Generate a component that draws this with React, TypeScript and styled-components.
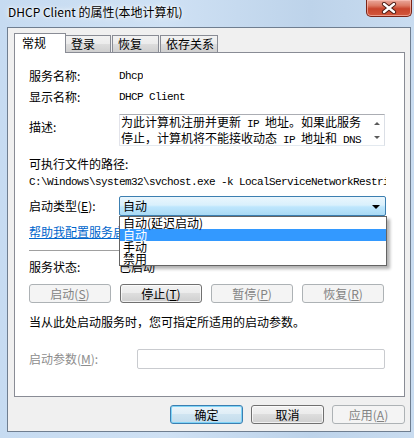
import styled, { createGlobalStyle } from 'styled-components';

const CJK = `"Noto Sans CJK SC", "Liberation Sans", sans-serif`;
const MONO = `"Liberation Mono", "Noto Sans CJK SC", monospace`;

const GlobalStyle = createGlobalStyle`
  html, body {
    margin: 0;
    padding: 0;
  }
  body {
    width: 414px;
    height: 438px;
    overflow: hidden;
    font-family: ${CJK};
    font-size: 12px;
  }
`;

const Window = styled.div`
  width: 414px;
  height: 438px;
  box-sizing: border-box;
  display: flex;
  flex-direction: column;
  background: linear-gradient(to right, #c6dbf1 0%, #cfe1f4 40%, #bdd3ea 75%, #c9dcf0 100%);
  font-family: ${CJK};
  font-size: 12px;
  color: #000;
`;

const TitleBar = styled.div`
  height: 27px;
  flex: none;
  display: flex;
  justify-content: space-between;
  align-items: flex-start;
  padding: 0 2px 0 8px;
`;

const Title = styled.div`
  margin-top: 3px;
  line-height: 18px;
  font-size: 12px;
  text-shadow: 0 0 6px #ffffff, 0 0 3px #ffffff;
  white-space: nowrap;
`;

const CloseButton = styled.div`
  width: 46px;
  height: 17px;
  box-sizing: border-box;
  border: 1px solid #7a2416;
  border-top: none;
  border-radius: 0 0 5px 5px;
  background: linear-gradient(to bottom, #e9a99c 0%, #dc7a64 35%, #c8452c 55%, #d3583d 100%);
  box-shadow: inset 0 0 0 1px rgba(255, 200, 190, 0.6);
  display: flex;
  align-items: center;
  justify-content: center;
`;

const Client = styled.div`
  flex: 1;
  margin: 0 3px 6px 7px;
  border: 1px solid #6f7e90;
  background: #f0f0f0;
  padding: 5px 5px 0 6px;
  display: flex;
  flex-direction: column;
`;

const TabStrip = styled.div`
  height: 19px;
  display: flex;
  align-items: flex-end;
`;

const Tab = styled.div<{ $active?: boolean; $w: number }>`
  position: relative;
  box-sizing: border-box;
  width: ${(p) => p.$w}px;
  height: ${(p) => (p.$active ? 20 : 17)}px;
  margin-bottom: ${(p) => (p.$active ? -1 : 0)}px;
  margin-right: ${(p) => (p.$active ? 0 : 1)}px;
  z-index: ${(p) => (p.$active ? 1 : 0)};
  border: 1px solid #898c95;
  border-bottom: none;
  padding-left: ${(p) => (p.$active ? 7 : 5)}px;
  line-height: ${(p) => (p.$active ? 18 : 16)}px;
  background: ${(p) =>
    p.$active ? '#ffffff' : 'linear-gradient(to bottom, #f2f2f2 0%, #ebebeb 50%, #dddddd 50%, #cfcfcf 100%)'};
  white-space: nowrap;
`;

const Panel = styled.div`
  box-sizing: border-box;
  height: 345px;
  border: 1px solid #898c95;
  background: #ffffff;
  padding: 16px 18px 0 14px;
  display: flex;
  flex-direction: column;
`;

const Row = styled.div<{ $mt: number; $h?: number }>`
  display: flex;
  align-items: flex-start;
  margin-top: ${(p) => p.$mt}px;
  height: ${(p) => p.$h ?? 14}px;
  line-height: 14px;
  white-space: nowrap;
`;

const Label = styled.div<{ $w?: number; $pt?: number; $disabled?: boolean }>`
  flex: none;
  width: ${(p) => p.$w ?? 90}px;
  padding-top: ${(p) => p.$pt ?? 0}px;
  color: ${(p) => (p.$disabled ? '#8d8d8d' : '#000')};
`;

const Mono = styled.span`
  font-family: ${MONO};
  font-size: 11px;
  letter-spacing: -0.6px;
`;

const Value = styled.div`
  font-family: ${MONO};
  font-size: 11px;
  letter-spacing: -0.6px;
  overflow: hidden;
`;

const DescBox = styled.div`
  box-sizing: border-box;
  width: 266px;
  height: 32px;
  border: 1px solid #abadb3;
  border-color: #abadb3 #dbdfe6 #e3e9ef #e2e3ea;
  display: flex;
  background: #fff;
`;

const DescText = styled.div`
  flex: 1;
  padding-left: 1px;
  line-height: 13px;
  overflow: hidden;
`;

const MiniScroll = styled.div`
  width: 14px;
  display: flex;
  flex-direction: column;
  align-items: center;
  padding-top: 7px;
  gap: 11px;
`;

const Arrow = styled.div<{ $down?: boolean }>`
  width: 0;
  height: 0;
  border-left: 3px solid transparent;
  border-right: 3px solid transparent;
  ${(p) => (p.$down ? 'border-top: 3px solid #5a5a5a;' : 'border-bottom: 3px solid #5a5a5a;')}
`;

const ComboWrap = styled.div`
  position: relative;
  width: 267px;
  z-index: 2;
`;

const Combo = styled.div`
  box-sizing: border-box;
  height: 20px;
  border: 1px solid #3c7fb1;
  border-radius: 2px;
  background: linear-gradient(to bottom, #eaf6fd 0%, #d9f0fc 45%, #bee6fd 55%, #a9daf4 100%);
  display: flex;
  align-items: center;
  justify-content: space-between;
  padding: 0 5px 0 3px;
  line-height: 18px;
`;

const ComboArrow = styled.div`
  width: 0;
  height: 0;
  border-left: 4px solid transparent;
  border-right: 4px solid transparent;
  border-top: 4px solid #000;
  margin-top: 1px;
`;

const DropList = styled.div`
  position: absolute;
  top: 100%;
  left: 0;
  box-sizing: border-box;
  width: 268px;
  border: 1px solid #646464;
  background: #fff;
  box-shadow: 3px 3px 3px rgba(0, 0, 0, 0.3);
`;

const DropItem = styled.div<{ $selected?: boolean }>`
  height: 12px;
  line-height: 12px;
  padding-left: 3px;
  background: ${(p) => (p.$selected ? '#3399ff' : 'transparent')};
  color: ${(p) => (p.$selected ? '#fff' : '#000')};
`;

const Link = styled.a`
  color: #0066cc;
  text-decoration: underline;
`;

const Divider = styled.div<{ $mt: number }>`
  margin-top: ${(p) => p.$mt}px;
  height: 1px;
  background: #a0a0a0;
  flex: none;
`;

const ButtonRow = styled.div<{ $mt: number; $justify?: string }>`
  display: flex;
  gap: ${(p) => (p.$justify ? 8 : 9)}px;
  justify-content: ${(p) => p.$justify ?? 'flex-start'};
  margin-top: ${(p) => p.$mt}px;
`;

const Button = styled.div<{ $w: number; $disabled?: boolean; $default?: boolean }>`
  box-sizing: border-box;
  width: ${(p) => p.$w}px;
  height: 19px;
  border: 1px solid ${(p) => (p.$disabled ? '#adb2b5' : p.$default ? '#3c7fb1' : '#707070')};
  border-radius: 3px;
  background: ${(p) =>
    p.$disabled
      ? '#f4f4f4'
      : p.$default
      ? 'linear-gradient(to bottom, #eaf4fa 0%, #dfedf6 50%, #cfe4f1 50%, #c3dcec 100%)'
      : 'linear-gradient(to bottom, #f2f2f2 0%, #ebebeb 50%, #dddddd 50%, #cfcfcf 100%)'};
  box-shadow: ${(p) => (p.$default ? 'inset 0 0 0 1px #7fd4f7' : p.$disabled ? 'none' : 'inset 0 0 0 1px rgba(255,255,255,0.7)')};
  color: ${(p) => (p.$disabled ? '#838383' : '#000')};
  text-align: center;
  line-height: 17px;
  white-space: nowrap;
`;

const Input = styled.div`
  box-sizing: border-box;
  width: 248px;
  height: 20px;
  border: 1px solid #c9cbcf;
  border-radius: 2px;
  background: #fff;
`;

const CloseGlyph = () => (
  <svg width="16" height="12" viewBox="0 0 16 12">
    <path d="M3 2 L13 10 M13 2 L3 10" stroke="#4a1a12" strokeWidth="4.2" strokeLinecap="round" />
    <path d="M3 2 L13 10 M13 2 L3 10" stroke="#ffffff" strokeWidth="2.4" strokeLinecap="round" />
  </svg>
);

export default function App() {
  return (
    <>
      <GlobalStyle />
      <Window>
        <TitleBar>
          <Title>DHCP Client 的属性(本地计算机)</Title>
          <CloseButton>
            <CloseGlyph />
          </CloseButton>
        </TitleBar>
        <Client>
          <TabStrip>
            <Tab $active $w={52}>常规</Tab>
            <Tab $w={46} style={{ marginLeft: -1 }}>登录</Tab>
            <Tab $w={47}>恢复</Tab>
            <Tab $w={58}>依存关系</Tab>
          </TabStrip>
          <Panel>
            <Row $mt={0}>
              <Label>服务名称:</Label>
              <Value>Dhcp</Value>
            </Row>
            <Row $mt={7}>
              <Label>显示名称:</Label>
              <Value>DHCP Client</Value>
            </Row>
            <Row $mt={10} $h={32}>
              <Label $pt={6}>描述:</Label>
              <DescBox>
                <DescText>
                  <div>
                    为此计算机注册并更新<Mono> IP </Mono>地址。如果此服务
                  </div>
                  <div>
                    停止，计算机将不能接收动态<Mono> IP </Mono>地址和<Mono> DNS</Mono>
                  </div>
                </DescText>
                <MiniScroll>
                  <Arrow />
                  <Arrow $down />
                </MiniScroll>
              </DescBox>
            </Row>
            <Row $mt={11}>
              <Label $w={200}>可执行文件的路径:</Label>
            </Row>
            <Row $mt={4}>
              <Value>C:\Windows\system32\svchost.exe -k LocalServiceNetworkRestri</Value>
            </Row>
            <Row $mt={7} $h={20}>
              <Label $pt={3}>
                启动类型(<u>E</u>):
              </Label>
              <ComboWrap>
                <Combo>
                  <span>自动</span>
                  <ComboArrow />
                </Combo>
                <DropList>
                  <DropItem>自动(延迟启动)</DropItem>
                  <DropItem $selected>自动</DropItem>
                  <DropItem>手动</DropItem>
                  <DropItem>禁用</DropItem>
                </DropList>
              </ComboWrap>
            </Row>
            <Row $mt={9}>
              <Link>帮助我配置服务启动选项。</Link>
            </Row>
            <Divider $mt={11} />
            <Row $mt={9}>
              <Label>服务状态:</Label>
              <div>已启动</div>
            </Row>
            <ButtonRow $mt={10}>
              <Button $w={82} $disabled>
                启动(<u>S</u>)
              </Button>
              <Button $w={82}>
                停止(<u>T</u>)
              </Button>
              <Button $w={82} $disabled>
                暂停(<u>P</u>)
              </Button>
              <Button $w={82} $disabled>
                恢复(<u>R</u>)
              </Button>
            </ButtonRow>
            <Row $mt={12}>当从此处启动服务时，您可指定所适用的启动参数。</Row>
            <Row $mt={20} $h={20}>
              <Label $w={108} $pt={3} $disabled>
                启动参数(<u>M</u>):
              </Label>
              <Input />
            </Row>
          </Panel>
          <ButtonRow $mt={8} $justify="flex-end">
            <Button $w={73} $default>
              确定
            </Button>
            <Button $w={73}>取消</Button>
            <Button $w={73} $disabled>
              应用(<u>A</u>)
            </Button>
          </ButtonRow>
        </Client>
      </Window>
    </>
  );
}
